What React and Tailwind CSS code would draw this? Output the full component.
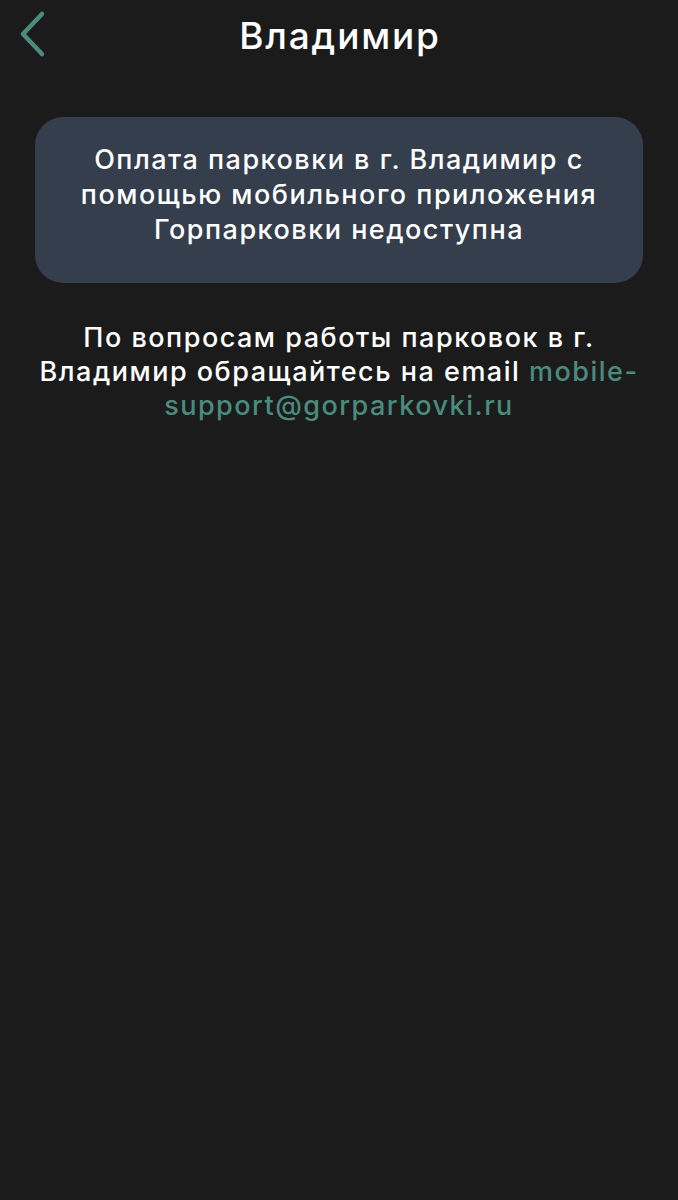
import React from 'react';

const BackIcon = () => (
  <svg width="30" height="48" viewBox="0 0 30 48" fill="none">
    <path d="M24 4 L5 24 L24 44" stroke="#4a8b7d" strokeWidth="4.5" strokeLinecap="round" strokeLinejoin="round" />
  </svg>
);

export default function App() {
  return (
    <div className="min-h-[1200px] w-full bg-[#1b1b1b] text-white" style={{ fontFamily: 'Inter, "Noto Sans", sans-serif' }}>
      {/* Header */}
      <header className="relative h-[70px] flex items-center justify-center">
        <button className="absolute left-[18px] top-[10px]">
          <BackIcon />
        </button>
        <h1 className="text-[37px] font-medium leading-none tracking-[1.8px] pl-[2px]">Владимир</h1>
      </header>

      {/* Content */}
      <main className="px-[35px] pt-[47px]">
        <div className="bg-[#343e4c] rounded-[28px] h-[166px] flex items-center justify-center px-5">
          <p className="text-center text-[27px] font-medium leading-[35px] tracking-[1.5px] -mt-[12px]">
            Оплата парковки в г. Владимир с помощью мобильного приложения Горпарковки недоступна
          </p>
        </div>

        <p className="mt-[38px] text-center text-[27px] font-medium leading-[34px] tracking-[1.5px] -mx-[4px]">
          По вопросам работы парковок в г. Владимир обращайтесь на email{' '}
          <span className="text-[#4a8b7d]">mobile-support@gorparkovki.ru</span>
        </p>
      </main>
    </div>
  );
}
